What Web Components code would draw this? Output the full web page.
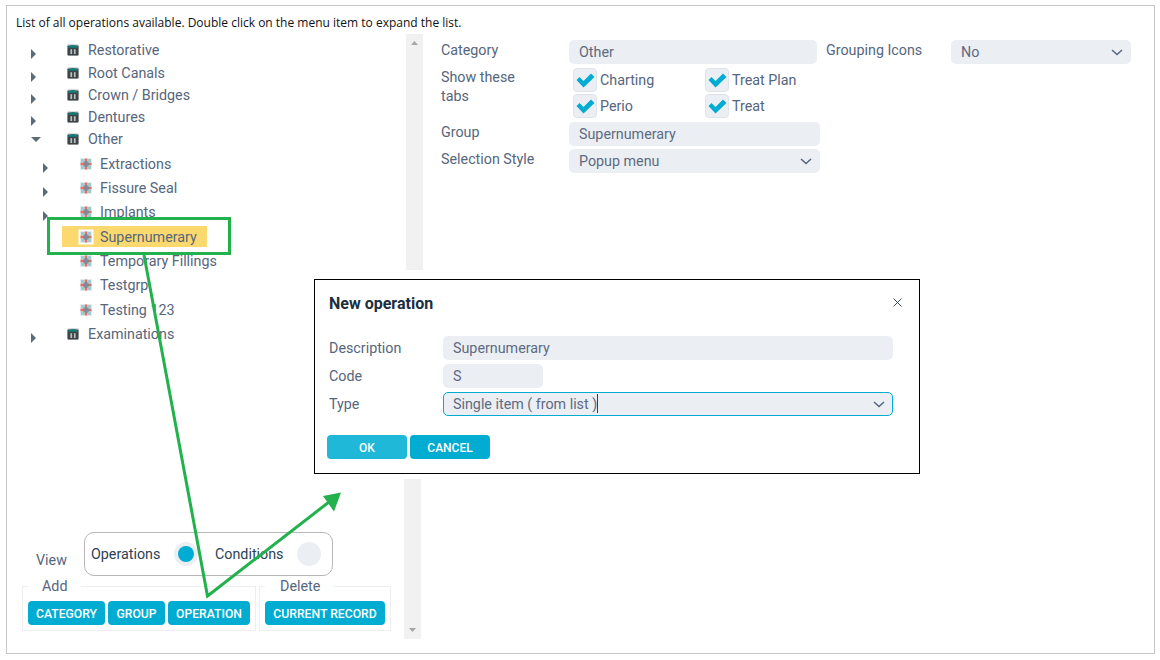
<!DOCTYPE html>
<html>
<head>
<meta charset="utf-8">
<title>Operations</title>
<style>
html, body { margin: 0; background: #fff; }
body { font-family: Roboto, "Liberation Sans", sans-serif; font-size: 14.3px; color: #56667c; }
</style>
</head>
<body>
<op-page>
  <op-tree slot="tree">
    <tree-row kind="category" toggle="right">Restorative</tree-row>
    <tree-row kind="category" toggle="right">Root Canals</tree-row>
    <tree-row kind="category" toggle="right">Crown / Bridges</tree-row>
    <tree-row kind="category" toggle="right">Dentures</tree-row>
    <tree-row kind="category" toggle="down">Other</tree-row>
    <tree-branch>
      <tree-row kind="group" toggle="right">Extractions</tree-row>
      <tree-row kind="group" toggle="right">Fissure Seal</tree-row>
      <tree-row kind="group" toggle="right">Implants</tree-row>
      <tree-row kind="group" selected>Supernumerary</tree-row>
      <tree-row kind="group">Temporary Fillings</tree-row>
      <tree-row kind="group">Testgrp</tree-row>
      <tree-row kind="group">Testing 123</tree-row>
    </tree-branch>
    <tree-row kind="category" toggle="right">Examinations</tree-row>
  </op-tree>

  <view-switch slot="tools"></view-switch>
  <op-actions slot="tools"></op-actions>

  <scroll-rail slot="rail"></scroll-rail>
  <op-form slot="form"></op-form>

  <new-operation-dialog slot="overlay"></new-operation-dialog>
  <arrow-notes slot="overlay"></arrow-notes>
</op-page>

<script>
const CHEVRON = `<svg width="12" height="7" viewBox="0 0 12 7"><path d="M1 1l5 4.6L11 1" fill="none" stroke="#55657f" stroke-width="1.5"/></svg>`;

class OpPage extends HTMLElement {
    constructor() {
        super();
        this.attachShadow({mode: "open"}).innerHTML = `
        <style>
        :host { display: block; position: relative; width: 1160px; height: 660px; padding: 5px 0 0 6px; box-sizing: border-box; }
        .frame { box-sizing: border-box; width: 1149px; height: 649px; border: 1px solid #c6c6c6; padding: 9px 0 0 9px; }
        .intro { font: 12px/15px "Open Sans", sans-serif; color: #111; height: 19px; white-space: nowrap; }
        .main { display: flex; height: 605px; }
        .left { width: 388px; display: flex; flex-direction: column; justify-content: space-between; padding-bottom: 8px; box-sizing: border-box; }
        .form { margin-left: 18px; padding-top: 6px; }
        </style>
        <div class="frame">
            <div class="intro">List of all operations available. Double click on the menu item to expand the list.</div>
            <div class="main">
                <div class="left">
                    <slot name="tree"></slot>
                    <div><slot name="tools"></slot></div>
                </div>
                <slot name="rail"></slot>
                <div class="form"><slot name="form"></slot></div>
            </div>
        </div>
        <slot name="overlay"></slot>
        `;
    }
}

class OpTree extends HTMLElement {
    constructor() {
        super();
        this.attachShadow({mode: "open"}).innerHTML = `
        <style>:host { display: block; padding-top: 5.3px; }</style>
        <slot></slot>
        `;
    }
}

class TreeBranch extends HTMLElement {
    constructor() {
        super();
        this.attachShadow({mode: "open"}).innerHTML = `
        <style>:host { display: block; padding: 1.2px 0 0.7px 12px; --row-height: 24.3px; --toggle-width: 37px; }</style>
        <slot></slot>
        `;
    }
}

class TreeRow extends HTMLElement {
    constructor() {
        super();
        const kind = this.getAttribute("kind");
        const toggle = this.getAttribute("toggle");
        const icon = kind === "category"
            ? `<svg class="icon" width="12" height="12" viewBox="0 0 12 12">
                 <rect width="12" height="12" rx="1.5" fill="#d9dbdb"/>
                 <rect x="0.5" y="1.5" width="11" height="10" rx="1" fill="#3f4345"/>
                 <path d="M1 3Q6 -0.8 11 3V3.8H1z" fill="#0f7f7c"/>
                 <rect x="3.4" y="5.2" width="1.7" height="4.8" fill="#b8c2c2"/>
                 <rect x="6.9" y="5.2" width="1.7" height="4.8" fill="#b8c2c2"/>
               </svg>`
            : `<svg class="icon" width="12" height="12" viewBox="0 0 12 12">
                 <rect width="12" height="12" fill="#e3ecee"/>
                 <path d="M1 1h3.5v3.5H1zM7.5 1H11v3.5H7.5zM1 7.5h3.5V11H1zM7.5 7.5H11V11H7.5z" fill="#9accd0"/>
                 <path d="M4.8 0.5h2.4v11H4.8zM0.5 4.8h11v2.4H0.5z" fill="#ec6a6a"/>
                 <path d="M4.5 3h3v1.5H9v3H7.5V9h-3V7.5H3v-3h1.5z" fill="#84888f"/>
               </svg>`;
        let arrow = "";
        if (toggle === "right") arrow = `<svg width="5" height="10" viewBox="0 0 5 10"><path d="M0 0l5 5-5 5z" fill="#5b6b78"/></svg>`;
        if (toggle === "down") arrow = `<svg width="10" height="5" viewBox="0 0 10 5"><path d="M0 0h10L5 5z" fill="#5b6b78"/></svg>`;
        this.attachShadow({mode: "open"}).innerHTML = `
        <style>
        :host { display: flex; align-items: center; height: var(--row-height, 22.25px); padding-left: 15px; white-space: nowrap; }
        .toggle { width: var(--toggle-width, 36px); flex: none; height: 10px; margin-top: ${toggle === "down" ? 5 : 8}px; }
        .toggle svg { display: block; }
        .cell { display: flex; align-items: center; gap: 9px; height: 21px; margin-left: -18px; padding: 0 10px 0 18px; }
        :host([kind="group"]) .cell { gap: 8px; }
        .icon { display: block; flex: none; }
        :host([selected]) .cell { background: #fbd96e; }
        :host([selected]) .icon { background: #fff; box-shadow: 0 0 0 1.5px #fff; }
        </style>
        <span class="toggle">${arrow}</span>
        <span class="cell">${icon}<slot></slot></span>
        `;
    }
}

class ViewSwitch extends HTMLElement {
    constructor() {
        super();
        this.attachShadow({mode: "open"}).innerHTML = `
        <style>
        :host { display: flex; padding-left: 20px; }
        .view { width: 48px; padding-top: 18px; line-height: 20px; }
        .pill { box-sizing: border-box; width: 249px; height: 44px; border: 1px solid #b7b7b7; border-radius: 10px; display: flex; align-items: center; padding-left: 6px; color: #2e3f56; }
        .name { width: 83px; flex: none; }
        .name + .radio + .name { width: 82px; }
        .radio { width: 24px; height: 24px; flex: none; border-radius: 50%; background: #ebeff3; display: flex; align-items: center; justify-content: center; margin-right: 17px; }
        .radio:last-child { margin-right: 0; }
        .radio i { width: 16px; height: 16px; border-radius: 50%; background: #00acd1; }
        </style>
        <div class="view">View</div>
        <div class="pill">
            <span class="name">Operations</span><span class="radio"><i></i></span>
            <span class="name">Conditions</span><span class="radio"></span>
        </div>
        `;
    }
}

class OpActions extends HTMLElement {
    constructor() {
        super();
        this.attachShadow({mode: "open"}).innerHTML = `
        <style>
        :host { display: flex; gap: 3px; padding-left: 6px; }
        fieldset { margin: 0; border: 1px solid #eeeeee; padding: 5px; display: flex; gap: 3px; min-width: 0; }
        legend { padding: 0; height: 20px; line-height: 20px; text-align: left; }
        legend span { display: block; box-sizing: border-box; }
        .add legend span { width: 53px; padding-left: 14px; }
        .del legend span { width: 68px; padding-left: 15px; }
        button { font: 500 12.2px Roboto, sans-serif; color: #fff; background: #00acd1; border: 0; border-radius: 4px; height: 24px; padding: 1px 0 0; }
        </style>
        <fieldset class="add">
            <legend><span>Add</span></legend>
            <button style="width:77px">CATEGORY</button>
            <button style="width:57px">GROUP</button>
            <button style="width:82px">OPERATION</button>
        </fieldset>
        <fieldset class="del">
            <legend><span>Delete</span></legend>
            <button style="width:120px">CURRENT RECORD</button>
        </fieldset>
        `;
    }
}

class ScrollRail extends HTMLElement {
    constructor() {
        super();
        this.attachShadow({mode: "open"}).innerHTML = `
        <style>
        :host { display: flex; flex-direction: column; justify-content: space-between; width: 19px; flex: none; }
        .seg { width: 17px; background: #f1f1f1; display: flex; justify-content: center; box-sizing: border-box; }
        .top { height: 236px; margin-left: 2px; padding-top: 7px; align-items: flex-start; }
        .bottom { height: 160px; padding-bottom: 7px; align-items: flex-end; }
        svg { display: block; }
        </style>
        <div class="seg top"><svg width="7" height="4" viewBox="0 0 7 4"><path d="M0 4L3.5 0 7 4z" fill="#a6a6a6"/></svg></div>
        <div class="seg bottom"><svg width="7" height="4" viewBox="0 0 7 4"><path d="M0 0h7L3.5 4z" fill="#a6a6a6"/></svg></div>
        `;
    }
}

class TickBox extends HTMLElement {
    constructor() {
        super();
        this.attachShadow({mode: "open"}).innerHTML = `
        <style>
        :host { display: flex; align-items: center; gap: 3px; height: 24px; }
        .box { box-sizing: border-box; width: 24px; height: 24px; background: #ebeff3; border: 1px solid #e0e4ea; border-radius: 4px; display: flex; align-items: center; justify-content: center; }
        svg { display: block; }
        </style>
        <span class="box"><svg width="19" height="15" viewBox="0 0 19 15"><path d="M0.5 7L3.5 4L7.5 8L15 0.5L18.5 4L7.5 14.5z" fill="#00acd1"/></svg></span>
        <slot></slot>
        `;
    }
}

class FieldBox extends HTMLElement {
    constructor() {
        super();
        const chevron = this.hasAttribute("select") ? CHEVRON : "";
        this.attachShadow({mode: "open"}).innerHTML = `
        <style>
        :host { display: flex; align-items: center; justify-content: space-between; box-sizing: border-box; height: 24px; background: #ebeff3; border-radius: 5px; padding: 0 8px 0 10px; color: #5e6a82; line-height: 24px; white-space: nowrap; }
        :host([focus]) { border: 1px solid #00acd1; padding-left: 9px; padding-right: 7px; }
        svg { display: block; flex: none; }
        .caret { display: inline-block; width: 1px; height: 19px; background: #2d3e55; vertical-align: -4px; }
        </style>
        <span><slot></slot>${this.hasAttribute("focus") ? '<i class="caret"></i>' : ""}</span>
        ${chevron}
        `;
    }
}

class OpForm extends HTMLElement {
    constructor() {
        super();
        this.attachShadow({mode: "open"}).innerHTML = `
        <style>
        :host { display: block; }
        .row { display: flex; margin-bottom: 3px; }
        .label { width: 128px; line-height: 20px; flex: none; }
        .tabs { margin-bottom: 4px; padding-top: 2px; }
        .tabs .label { width: 100px; line-height: 19px; margin: -0.5px 28px 0 0; }
        .ticks { display: grid; grid-template-columns: 132px 132px; row-gap: 2px; margin-left: 4px; }
        .group-label { width: 125px; margin-left: 9px; line-height: 20px; }
        </style>
        <div class="row" style="margin-bottom:2px">
            <span class="label">Category</span>
            <field-box style="width:248px">Other</field-box>
            <span class="group-label">Grouping Icons</span>
            <field-box select style="width:180px">No</field-box>
        </div>
        <div class="row tabs">
            <span class="label">Show these tabs</span>
            <div class="ticks">
                <tick-box>Charting</tick-box>
                <tick-box>Treat Plan</tick-box>
                <tick-box>Perio</tick-box>
                <tick-box>Treat</tick-box>
            </div>
        </div>
        <div class="row">
            <span class="label">Group</span>
            <field-box style="width:251px">Supernumerary</field-box>
        </div>
        <div class="row">
            <span class="label">Selection Style</span>
            <field-box select style="width:251px">Popup menu</field-box>
        </div>
        `;
    }
}

class NewOperationDialog extends HTMLElement {
    constructor() {
        super();
        this.attachShadow({mode: "open"}).innerHTML = `
        <style>
        :host { position: absolute; left: 314px; top: 279px; width: 606px; height: 195px; box-sizing: border-box; border: 1px solid #000; background: #fff; padding: 0 26px 0 14px; }
        .head { display: flex; justify-content: space-between; align-items: center; height: 46px; margin-bottom: 10px; }
        h2 { margin: 0; font: 700 16px Roboto, sans-serif; color: #1b2e3f; }
        .close { display: block; margin: 0 -9px 2px 0; }
        .row { display: flex; margin-bottom: 4px; }
        .row span { width: 114px; line-height: 24px; flex: none; }
        .row field-box { flex: 1; }
        .row field-box.short { flex: none; width: 100px; }
        .buttons { display: flex; gap: 3px; margin: 19px 0 0 -2px; }
        button { font: 500 12px Roboto, sans-serif; color: #fff; border: 0; border-radius: 4px; width: 80px; height: 24px; padding: 1px 0 0; background: #00acd1; }
        button.ok { background: #20b8d8; }
        </style>
        <div class="head">
            <h2>New operation</h2>
            <svg class="close" width="9" height="9" viewBox="0 0 9 9"><path d="M.5.5l8 8M8.5.5l-8 8" stroke="#3d4d5c" stroke-width="1" fill="none"/></svg>
        </div>
        <div class="row"><span>Description</span><field-box>Supernumerary</field-box></div>
        <div class="row"><span>Code</span><field-box class="short">S</field-box></div>
        <div class="row"><span>Type</span><field-box select focus>Single item ( from list )</field-box></div>
        <div class="buttons"><button class="ok">OK</button><button>CANCEL</button></div>
        `;
    }
}

class ArrowNotes extends HTMLElement {
    constructor() {
        super();
        this.attachShadow({mode: "open"}).innerHTML = `
        <style>
        :host { position: absolute; left: 0; top: 0; width: 1160px; height: 660px; pointer-events: none; }
        svg { display: block; }
        </style>
        <svg width="1160" height="660" viewBox="0 0 1160 660">
            <rect x="48.5" y="218.5" width="181" height="35" fill="none" stroke="#22b14c" stroke-width="3"/>
            <path d="M144 255L207.5 596L329 502" fill="none" stroke="#22b14c" stroke-width="3"/>
            <path d="M341 492.5L323 496L334 511.5z" fill="#22b14c"/>
        </svg>
        `;
    }
}

customElements.define("op-page", OpPage);
customElements.define("op-tree", OpTree);
customElements.define("tree-branch", TreeBranch);
customElements.define("tree-row", TreeRow);
customElements.define("view-switch", ViewSwitch);
customElements.define("op-actions", OpActions);
customElements.define("scroll-rail", ScrollRail);
customElements.define("tick-box", TickBox);
customElements.define("field-box", FieldBox);
customElements.define("op-form", OpForm);
customElements.define("new-operation-dialog", NewOperationDialog);
customElements.define("arrow-notes", ArrowNotes);
</script>
</body>
</html>
